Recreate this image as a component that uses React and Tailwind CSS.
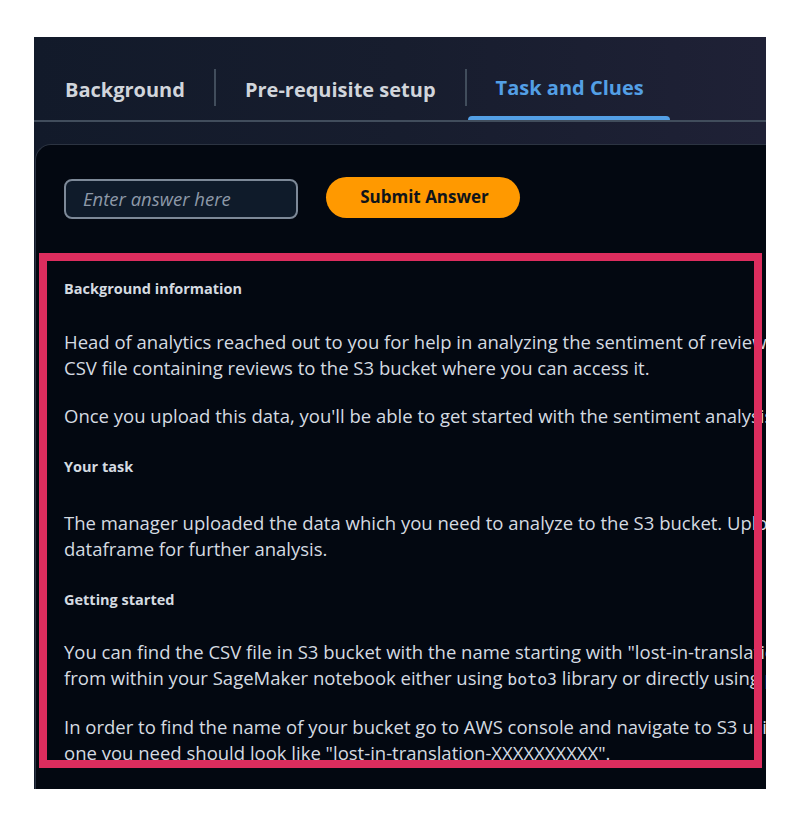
export default function App() {
  const font = { fontFamily: '"Open Sans", "Noto Sans", sans-serif' };
  return (
    <div className="min-h-[816px] w-[803px] bg-white pt-[37px] pl-[34px]" style={font}>
      <div className="relative h-[752px] w-[732px] overflow-hidden bg-gradient-to-r from-[#121a2a] via-[#171d2e] to-[#1f2136]">
        {/* Tabs */}
        <div className="flex h-[85px] items-stretch border-b-2 border-[#414d5c] pl-[31px] pt-[19px]">
          <div className="flex items-center pr-[29px] pt-[3px] text-[20px] font-bold text-[#d1d5db]">Background</div>
          <div className="self-center mb-[2px] h-[37px] w-[2px] bg-[#414d5c]" />
          <div className="flex items-center px-[29px] pt-[3px] text-[20px] font-bold text-[#d1d5db]">Pre-requisite setup</div>
          <div className="self-center mb-[2px] h-[37px] w-[2px] bg-[#414d5c]" />
          <div className="ml-[1px] flex flex-col">
            <div className="flex flex-1 items-center pl-[28px] pr-[26px] pt-[4px] text-[20px] font-bold text-[#539fe5]">Task and Clues</div>
            <div className="h-[4px] rounded-t-sm bg-[#539fe5]" />
          </div>
        </div>
        {/* Card */}
        <div className="mt-[22px] ml-[1px] h-[700px] rounded-tl-2xl border-l border-t border-[#2c3442] bg-[#030811] pl-[28px] pt-[30px]">
          <div className="flex items-center gap-[28px]">
            <div className="mt-[4px] flex h-[40px] w-[234px] items-center rounded-lg border-2 border-[#7d8998] bg-[#0f1b2a] px-[17px] text-[18.5px] italic text-[#8d99a8]">
              Enter answer here
            </div>
            <button className="h-[41px] w-[194px] rounded-full bg-[#ff9900] pl-[3px] text-[17px] font-bold text-[#0f141a]">
              Submit Answer
            </button>
          </div>
          <div className="mt-[60px] flex flex-col whitespace-nowrap text-[#d5dbe1]">
            <div className="h-[20px] text-[14.5px] font-bold leading-[20px]">Background information</div>
            <div className="mt-[30px] text-[18.5px] leading-[26px]">
              <div>Head of analytics reached out to you for help in analyzing the sentiment of reviews. They uploaded a</div>
              <div>CSV file containing reviews to the S3 bucket where you can access it.</div>
            </div>
            <div className="mt-[22px] text-[18.5px] leading-[26px]">
              Once you upload this data, you'll be able to get started with the sentiment analysis of the reviews.
            </div>
            <div className="mt-[28px] h-[20px] text-[14.5px] font-bold leading-[20px]">Your task</div>
            <div className="mt-[33px] text-[18.5px] leading-[26px]">
              <div>The manager uploaded the data which you need to analyze to the S3 bucket. Upload it into a pandas</div>
              <div>dataframe for further analysis.</div>
            </div>
            <div className="mt-[28px] h-[20px] text-[14.5px] font-bold leading-[20px]">Getting started</div>
            <div className="mt-[29px] text-[18.5px] leading-[26px]">
              <div>You can find the CSV file in S3 bucket with the name starting with "lost-in-translation". You can access it</div>
              <div>
                from within your SageMaker notebook either using{' '}
                <span style={{ fontFamily: '"DejaVu Sans Mono", monospace' }} className="text-[16.5px]">boto3</span>{' '}
                library or directly using pandas.
              </div>
            </div>
            <div className="mt-[21px] text-[18.5px] leading-[26px]">
              <div>In order to find the name of your bucket go to AWS console and navigate to S3 using the search bar. The</div>
              <div>one you need should look like "lost-in-translation-XXXXXXXXXX".</div>
            </div>
            <div className="mt-[22px] text-[18.5px] leading-[26px]">
              <div>Once you have loaded the data into a dataframe, take a look at the reviews and the language they are in.</div>
            </div>
          </div>
        </div>
        {/* Annotation box */}
        <div className="pointer-events-none absolute left-[5px] top-[216px] h-[515px] w-[723px] border-[8px] border-[#dc2d5e]" />
      </div>
    </div>
  );
}
